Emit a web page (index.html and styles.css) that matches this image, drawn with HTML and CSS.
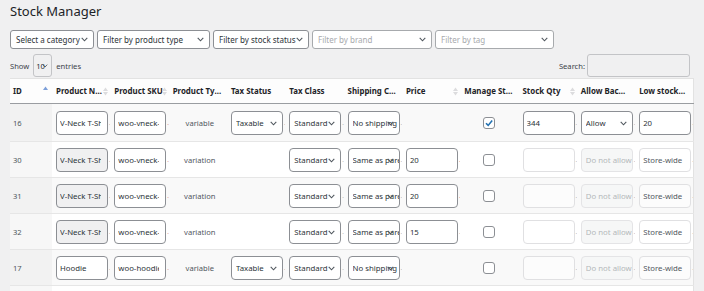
FILE: index.html
```html
<!DOCTYPE html>
<html>
<head>
<meta charset="utf-8">
<link rel="stylesheet" href="styles.css">
</head>
<body>
<div class="wrap">
  <h1 class="title">Stock Manager</h1>
  <div class="filters">
    <div class="fsel w1"><span>Select a category</span><svg class="chev" width="7" height="5" viewBox="0 0 7 5"><polyline points="0.7,0.8 3.5,3.8 6.3,0.8"/></svg></div>
    <div class="fsel w2"><span>Filter by product type</span><svg class="chev" width="7" height="5" viewBox="0 0 7 5"><polyline points="0.7,0.8 3.5,3.8 6.3,0.8"/></svg></div>
    <div class="fsel w3"><span>Filter by stock status</span><svg class="chev" width="7" height="5" viewBox="0 0 7 5"><polyline points="0.7,0.8 3.5,3.8 6.3,0.8"/></svg></div>
    <div class="fsel w4 ph"><span>Filter by brand</span><svg class="chev" width="7" height="5" viewBox="0 0 7 5"><polyline points="0.7,0.8 3.5,3.8 6.3,0.8"/></svg></div>
    <div class="fsel w5 ph"><span>Filter by tag</span><svg class="chev" width="7" height="5" viewBox="0 0 7 5"><polyline points="0.7,0.8 3.5,3.8 6.3,0.8"/></svg></div>
  </div>
  <div class="dt-top">
    <div class="length">Show <div class="lsel">10<svg class="chev lchev" width="6" height="4" viewBox="0 0 7 5"><polyline points="0.7,0.8 3.5,3.8 6.3,0.8"/></svg></div> entries</div>
    <div class="search">Search: <input class="sinput" type="text"></div>
  </div>
  <table class="grid">
    <colgroup>
      <col class="c-id"><col class="c"><col class="c"><col class="c"><col class="c"><col class="c"><col class="c"><col class="c"><col class="c"><col class="c"><col class="c"><col class="c">
    </colgroup>
    <thead>
      <tr>
        <th>ID<svg class="si asc" width="5" height="9" viewBox="0 0 5 9"><path d="M2.5 0.5 L5 4 H0Z"/></svg></th>
        <th>Product Name<svg class="si" width="5" height="9" viewBox="0 0 5 9"><path d="M2.5 0.5 L5 4 H0Z M2.5 8.5 L5 5 H0Z"/></svg></th>
        <th>Product SKU<svg class="si" width="5" height="9" viewBox="0 0 5 9"><path d="M2.5 0.5 L5 4 H0Z M2.5 8.5 L5 5 H0Z"/></svg></th>
        <th>Product Type</th>
        <th>Tax Status</th>
        <th>Tax Class</th>
        <th>Shipping Class</th>
        <th>Price<svg class="si" width="5" height="9" viewBox="0 0 5 9"><path d="M2.5 0.5 L5 4 H0Z M2.5 8.5 L5 5 H0Z"/></svg></th>
        <th>Manage Stock</th>
        <th>Stock Qty<svg class="si" width="5" height="9" viewBox="0 0 5 9"><path d="M2.5 0.5 L5 4 H0Z M2.5 8.5 L5 5 H0Z"/></svg></th>
        <th>Allow Backorders</th>
        <th>Low stockthreshold</th>
      </tr>
    </thead>
    <tbody>
      <tr class="odd first">
        <td class="id">16</td>
        <td><input class="ctl" value="V-Neck T-Shirt"><span class="dot">.</span></td>
        <td><input class="ctl" value="woo-vneck-tee"><span class="dot r">.</span></td>
        <td class="type">variable</td>
        <td><div class="ctl sel"><span>Taxable</span><svg class="chev" width="7" height="5" viewBox="0 0 7 5"><polyline points="0.7,0.8 3.5,3.8 6.3,0.8"/></svg></div><span class="dot">.</span></td>
        <td><div class="ctl sel"><span>Standard</span><svg class="chev" width="7" height="5" viewBox="0 0 7 5"><polyline points="0.7,0.8 3.5,3.8 6.3,0.8"/></svg></div><span class="dot">.</span></td>
        <td><div class="ctl sel"><span>No shipping</span><svg class="chev" width="7" height="5" viewBox="0 0 7 5"><polyline points="0.7,0.8 3.5,3.8 6.3,0.8"/></svg></div><span class="dot">.</span></td>
        <td></td>
        <td class="cb"><span class="box on"><svg width="10" height="10" viewBox="0 0 10 10"><polyline points="2,5.2 4.2,7.4 8.2,2.6"/></svg></span></td>
        <td><input class="ctl" value="344"><span class="dot">.</span></td>
        <td><div class="ctl sel"><span>Allow</span><svg class="chev" width="7" height="5" viewBox="0 0 7 5"><polyline points="0.7,0.8 3.5,3.8 6.3,0.8"/></svg></div><span class="dot">.</span></td>
        <td><input class="ctl" value="20"><span class="dot">.</span></td>
      </tr>
      <tr class="even">
        <td class="id">30</td>
        <td><input class="ctl dis" value="V-Neck T-Shirt - Red" disabled><span class="dot">.</span></td>
        <td><input class="ctl" value="woo-vneck-tee-red"><span class="dot r">.</span></td>
        <td class="type">variation</td>
        <td></td>
        <td><div class="ctl sel"><span>Standard</span><svg class="chev" width="7" height="5" viewBox="0 0 7 5"><polyline points="0.7,0.8 3.5,3.8 6.3,0.8"/></svg></div><span class="dot">.</span></td>
        <td><div class="ctl sel"><span>Same as parent</span><svg class="chev" width="7" height="5" viewBox="0 0 7 5"><polyline points="0.7,0.8 3.5,3.8 6.3,0.8"/></svg></div><span class="dot">.</span></td>
        <td><input class="ctl" value="20"><span class="dot r">.</span></td>
        <td class="cb"><span class="box"></span></td>
        <td><input class="ctl off" value="" disabled><span class="dot">.</span></td>
        <td><div class="ctl sel off2"><span>Do not allow</span></div><span class="dot">.</span></td>
        <td><input class="ctl off" value="Store-wide" disabled><span class="dot">.</span></td>
      </tr>
      <tr class="odd">
        <td class="id">31</td>
        <td><input class="ctl dis" value="V-Neck T-Shirt - Green" disabled><span class="dot">.</span></td>
        <td><input class="ctl" value="woo-vneck-tee-green"><span class="dot r">.</span></td>
        <td class="type">variation</td>
        <td></td>
        <td><div class="ctl sel"><span>Standard</span><svg class="chev" width="7" height="5" viewBox="0 0 7 5"><polyline points="0.7,0.8 3.5,3.8 6.3,0.8"/></svg></div><span class="dot">.</span></td>
        <td><div class="ctl sel"><span>Same as parent</span><svg class="chev" width="7" height="5" viewBox="0 0 7 5"><polyline points="0.7,0.8 3.5,3.8 6.3,0.8"/></svg></div><span class="dot">.</span></td>
        <td><input class="ctl" value="20"><span class="dot r">.</span></td>
        <td class="cb"><span class="box"></span></td>
        <td><input class="ctl off" value="" disabled><span class="dot">.</span></td>
        <td><div class="ctl sel off2"><span>Do not allow</span></div><span class="dot">.</span></td>
        <td><input class="ctl off" value="Store-wide" disabled><span class="dot">.</span></td>
      </tr>
      <tr class="even">
        <td class="id">32</td>
        <td><input class="ctl dis" value="V-Neck T-Shirt - Blue" disabled><span class="dot">.</span></td>
        <td><input class="ctl" value="woo-vneck-tee-blue"><span class="dot r">.</span></td>
        <td class="type">variation</td>
        <td></td>
        <td><div class="ctl sel"><span>Standard</span><svg class="chev" width="7" height="5" viewBox="0 0 7 5"><polyline points="0.7,0.8 3.5,3.8 6.3,0.8"/></svg></div><span class="dot">.</span></td>
        <td><div class="ctl sel"><span>Same as parent</span><svg class="chev" width="7" height="5" viewBox="0 0 7 5"><polyline points="0.7,0.8 3.5,3.8 6.3,0.8"/></svg></div><span class="dot">.</span></td>
        <td><input class="ctl" value="15"><span class="dot">.</span></td>
        <td class="cb"><span class="box"></span></td>
        <td><input class="ctl off" value="" disabled><span class="dot">.</span></td>
        <td><div class="ctl sel off2"><span>Do not allow</span></div><span class="dot">.</span></td>
        <td><input class="ctl off" value="Store-wide" disabled><span class="dot">.</span></td>
      </tr>
      <tr class="odd">
        <td class="id">17</td>
        <td><input class="ctl" value="Hoodie"><span class="dot">.</span></td>
        <td><input class="ctl" value="woo-hoodie"><span class="dot r">.</span></td>
        <td class="type">variable</td>
        <td><div class="ctl sel"><span>Taxable</span><svg class="chev" width="7" height="5" viewBox="0 0 7 5"><polyline points="0.7,0.8 3.5,3.8 6.3,0.8"/></svg></div><span class="dot">.</span></td>
        <td><div class="ctl sel"><span>Standard</span><svg class="chev" width="7" height="5" viewBox="0 0 7 5"><polyline points="0.7,0.8 3.5,3.8 6.3,0.8"/></svg></div><span class="dot">.</span></td>
        <td><div class="ctl sel"><span>No shipping</span><svg class="chev" width="7" height="5" viewBox="0 0 7 5"><polyline points="0.7,0.8 3.5,3.8 6.3,0.8"/></svg></div><span class="dot">.</span></td>
        <td></td>
        <td class="cb"><span class="box"></span></td>
        <td><input class="ctl off" value="" disabled><span class="dot">.</span></td>
        <td><div class="ctl sel off2"><span>Do not allow</span></div><span class="dot">.</span></td>
        <td><input class="ctl off" value="Store-wide" disabled><span class="dot">.</span></td>
      </tr>
      <tr class="even">
        <td class="id">18</td>
        <td></td><td></td><td></td><td></td><td></td><td></td><td></td><td></td><td></td><td></td><td></td>
      </tr>
    </tbody>
  </table>
</div>
</body>
</html>
```

FILE: styles.css
```css
html, body {
  margin: 0;
  padding: 0;
  background: #f0f0f1;
  font-family: "Noto Sans", "Open Sans", sans-serif;
  color: #3c434a;
  overflow: hidden;
  height: 291px;
}

.wrap {
  padding: 0 10px;
}

.title {
  margin: 0;
  height: 30px;
  font-size: 13px;
  font-weight: 400;
  line-height: 22px;
  color: #1d2327;
}

.filters {
  display: flex;
  gap: 3px;
  height: 19px;
}

.fsel {
  box-sizing: border-box;
  height: 19px;
  border: 1px solid #8c8f94;
  border-radius: 3px;
  background: #fff;
  display: flex;
  align-items: center;
  justify-content: space-between;
  padding: 0 5px 0 5px;
  font-size: 8px;
  color: #2c3338;
  white-space: nowrap;
}

.fsel.ph { color: #a7aaad; border-color: #a7aaad; }
.w1 { width: 84px; }
.w2 { width: 113px; }
.w3 { width: 96px; }
.w4 { width: 120px; }
.w5 { width: 119px; }

.chev {
  flex: none;
}
.chev polyline {
  fill: none;
  stroke: #50575e;
  stroke-width: 1.1;
}

.dt-top {
  display: flex;
  justify-content: space-between;
  align-items: center;
  height: 23px;
  margin-top: 5px;
  padding-right: 4px;
  font-size: 7.6px;
  color: #3c434a;
}

.length {
  display: flex;
  align-items: center;
}

.lsel {
  position: relative;
  box-sizing: border-box;
  width: 19px;
  height: 23px;
  margin: 0 4px 0 4px;
  border: 1px solid #c3c4c7;
  border-radius: 3px;
  background: #f0f0f1;
  display: flex;
  align-items: center;
  padding-left: 2px;
  font-size: 7.6px;
  color: #2c3338;
}

.lchev {
  position: absolute;
  right: 3px;
  top: 9px;
}

.search {
  display: flex;
  align-items: center;
}

.sinput {
  box-sizing: border-box;
  width: 103px;
  height: 23px;
  margin-left: 2px;
  border: 1px solid #c3c4c7;
  border-radius: 3px;
  background: #f0f0f1;
}

.grid {
  margin-top: 1px;
  width: 684px;
  table-layout: fixed;
  border-collapse: collapse;
  background: #fff;
  border-top: 1px solid #e2e2e2;
  border-right: 1px solid #e2e2e2;
}

.c-id { width: 42px; }
.c { width: 58.3px; }

.grid th {
  position: relative;
  height: 24px;
  padding: 0 5px 0 4px;
  text-align: left;
  font-size: 7.9px;
  font-weight: 700;
  color: #1d2327;
  white-space: nowrap;
  overflow: hidden;
  text-overflow: ellipsis;
  background: #fdfdfd;
  border-bottom: 1px solid #9a9da1;
}

.grid th:first-child { padding-left: 3px; }

.si {
  position: absolute;
  right: 2px;
  top: 8px;
}
.si path { fill: #dcdcde; }
.si.asc { right: 4px; top: 7px; }
.si.asc path { fill: #7c9fd9; }

.grid td {
  height: 35px;
  padding: 0 0 0 4px;
  white-space: nowrap;
  overflow: hidden;
  vertical-align: middle;
  border-top: 1px solid #e6e6e6;
  font-size: 7.6px;
  color: #50575e;
}

.grid tr.first td { height: 37px; }

.grid tr.odd td { background: #f9f9f9; }
.grid tr.even td { background: #fff; }
.grid tr.odd td.id { background: #f2f2f2; }
.grid tr.even td.id { background: #f7f7f7; }
.grid td.id { padding-left: 3px; }

.grid td.type {
  text-align: center;
  padding-left: 4px;
}

.grid td.cb {
  padding: 0;
  text-align: center;
}

.ctl {
  box-sizing: border-box;
  display: inline-block;
  width: 52px;
  height: 24px;
  vertical-align: middle;
  margin: 0;
  padding: 0 6px 0 3px;
  border: 1px solid #8c8f94;
  border-radius: 4px;
  background: #fff;
  font-family: "Noto Sans", "Open Sans", sans-serif;
  font-size: 7.8px;
  color: #2c3338;
  outline: none;
}

.ctl.dis {
  background: #f0f0f1;
  color: #2c3338;
  border-color: #8c8f94;
}

.ctl.off {
  background: rgba(255,255,255,0.5);
  border-color: #e0e0e2;
  color: #50575e;
}

.sel {
  position: relative;
  line-height: 22px;
  overflow: hidden;
  white-space: nowrap;
  padding: 0 0 0 4px;
}

.sel span {
  display: block;
  overflow: hidden;
}

.sel .chev {
  position: absolute;
  right: 5px;
  top: 9px;
}

.sel.off2 {
  background: #f6f7f7;
  border-color: #e4e4e6;
  color: #b4b7ba;
}

.dot {
  display: inline-block;
  vertical-align: middle;
  margin-left: 1px;
  font-size: 6px;
  color: #9a9a9a;
}
.dot.r { color: #c96a6a; }

.box {
  display: inline-block;
  box-sizing: border-box;
  width: 12px;
  height: 12px;
  border: 1px solid #8c8f94;
  border-radius: 3px;
  background: #fff;
  vertical-align: middle;
  position: relative;
}

.box svg {
  display: block;
  margin: 0;
}
.box svg polyline {
  fill: none;
  stroke: #2271b1;
  stroke-width: 1.6;
}
```
